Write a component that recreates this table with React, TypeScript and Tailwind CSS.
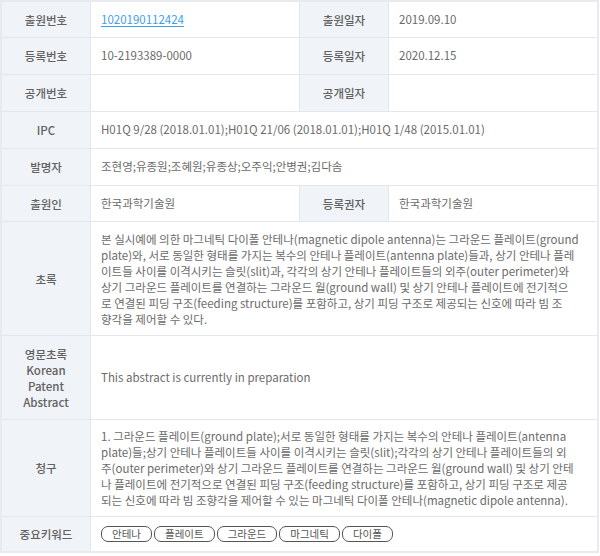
const FONT = "font-['Noto_Sans_CJK_KR','Noto_Sans',sans-serif]"

const abstractLines = [
  '본 실시예에 의한 마그네틱 다이폴 안테나(magnetic dipole antenna)는 그라운드 플레이트(ground',
  'plate)와, 서로 동일한 형태를 가지는 복수의 안테나 플레이트(antenna plate)들과, 상기 안테나 플레',
  '이트들 사이를 이격시키는 슬릿(slit)과, 각각의 상기 안테나 플레이트들의 외주(outer perimeter)와',
  '상기 그라운드 플레이트를 연결하는 그라운드 월(ground wall) 및 상기 안테나 플레이트에 전기적으',
  '로 연결된 피딩 구조(feeding structure)를 포함하고, 상기 피딩 구조로 제공되는 신호에 따라 빔 조',
  '향각을 제어할 수 있다.',
]

const claimLines = [
  '1. 그라운드 플레이트(ground plate);서로 동일한 형태를 가지는 복수의 안테나 플레이트(antenna',
  'plate)들;상기 안테나 플레이트들 사이를 이격시키는 슬릿(slit);각각의 상기 안테나 플레이트들의 외',
  '주(outer perimeter)와 상기 그라운드 플레이트를 연결하는 그라운드 월(ground wall) 및 상기 안테',
  '나 플레이트에 전기적으로 연결된 피딩 구조(feeding structure)를 포함하고, 상기 피딩 구조로 제공',
  '되는 신호에 따라 빔 조향각을 제어할 수 있는 마그네틱 다이폴 안테나(magnetic dipole antenna).',
]

const keywords = ['안테나', '플레이트', '그라운드', '마그네틱', '다이폴']

function Label({ children }: { children: React.ReactNode }) {
  return (
    <div className="w-[89px] shrink-0 self-stretch flex items-center justify-center text-center bg-[#f0f3f7] border-r border-[#e3e7ec] font-medium text-[#616161] leading-[16px]">
      {children}
    </div>
  )
}

function HalfRow({
  l1,
  v1,
  l2,
  v2,
  h,
}: {
  l1: string
  v1: React.ReactNode
  l2: string
  v2: React.ReactNode
  h: string
}) {
  return (
    <div className={`flex items-center border-b border-[#e3e7ec] ${h}`}>
      <Label>{l1}</Label>
      <div className="w-[209px] shrink-0 self-stretch flex items-center px-[10px] border-r border-[#e3e7ec]">
        {v1}
      </div>
      <Label>{l2}</Label>
      <div className="flex-1 self-stretch flex items-center px-[10px]">{v2}</div>
    </div>
  )
}

function FullRow({
  label,
  children,
  h,
  last = false,
}: {
  label: React.ReactNode
  children?: React.ReactNode
  h: string
  last?: boolean
}) {
  return (
    <div className={`flex items-center ${last ? '' : 'border-b border-[#e3e7ec]'} ${h}`}>
      <Label>{label}</Label>
      <div className="flex-1 self-stretch flex items-center px-[10px]">{children}</div>
    </div>
  )
}

function Lines({ lines }: { lines: string[] }) {
  return (
    <div className="leading-[16px]">
      {lines.map((line, i) => (
        <div key={i} className="whitespace-nowrap">
          {line}
        </div>
      ))}
    </div>
  )
}

export default function App() {
  return (
    <div className={`w-[600px] h-[556px] bg-white ${FONT} text-[11.5px] text-[#6b6b6b]`}>
      <div className="w-[599px] border-2 border-[#e8eaed]">
        <HalfRow
          h="h-[36px]"
          l1="출원번호"
          v1={<a className="text-[#3d9ff0] underline underline-offset-2">1020190112424</a>}
          l2="출원일자"
          v2="2019.09.10"
        />
        <HalfRow h="h-[37px]" l1="등록번호" v1="10-2193389-0000" l2="등록일자" v2="2020.12.15" />
        <HalfRow h="h-[37px]" l1="공개번호" v1="" l2="공개일자" v2="" />
        <FullRow h="h-[37px]" label="IPC">
          H01Q 9/28 (2018.01.01);H01Q 21/06 (2018.01.01);H01Q 1/48 (2015.01.01)
        </FullRow>
        <FullRow h="h-[37px]" label="발명자">
          조현영;유종원;조혜원;유종상;오주익;안병권;김다솜
        </FullRow>
        <HalfRow h="h-[36px]" l1="출원인" v1="한국과학기술원" l2="등록권자" v2="한국과학기술원" />
        <FullRow h="h-[114px]" label="초록">
          <Lines lines={abstractLines} />
        </FullRow>
        <FullRow
          h="h-[84px]"
          label={
            <div>
              영문초록
              <br />
              Korean
              <br />
              Patent
              <br />
              Abstract
            </div>
          }
        >
          This abstract is currently in preparation
        </FullRow>
        <FullRow h="h-[97px]" label="청구">
          <Lines lines={claimLines} />
        </FullRow>
        <FullRow h="h-[34px]" label="중요키워드" last>
          <div className="flex gap-[2px]">
            {keywords.map((k) => (
              <span
                key={k}
                className="h-[16px] flex items-center px-[10px] border border-[#555] rounded-[7px] text-[10.5px] text-[#555] leading-none"
              >
                {k}
              </span>
            ))}
          </div>
        </FullRow>
      </div>
    </div>
  )
}
